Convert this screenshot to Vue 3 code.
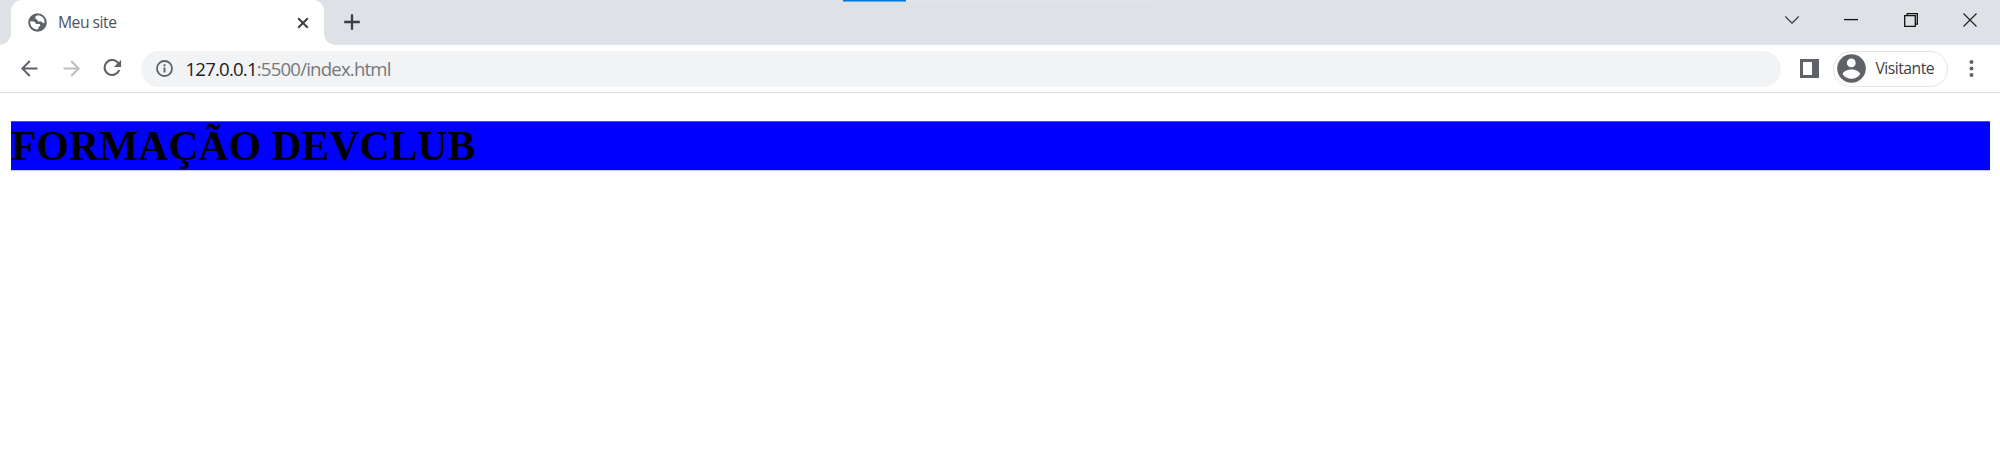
<script setup>
const pageTitle = 'Meu site'
const host = '127.0.0.1'
const path = ':5500/index.html'
</script>

<template>
  <div class="browser">
    <header class="tabstrip">
      <div class="loading"><div class="loading-value"></div></div>
      <div class="tab">
        <svg class="globe" width="19" height="19" viewBox="0 0 19 19">
          <circle cx="9.5" cy="9.5" r="9.3" fill="#5f6368" />
          <path d="M9.7 2.3C8.5 3 7.2 3.5 7.2 4.7c0 .8.4 1.3 1.2 1.5 1.3.2 1.4 1.1 1.1 2.1l4.1.2c.5 1.6 1.5 1.6 2.8 1.5.7-4-2.2-7.7-6.7-7.7zM2.2 8.3c-.5 4.3 2.8 8.3 7.4 8.2 1-.7.8-1.9 1.2-2.6.5-.7 1.5-.6 1.5-1.6 0-.8-.4-1.2-1.3-1.2H8.5c-1 0-.9-1.4-1.8-2.1-.9-.7-2.8-.5-4.5-.7z" fill="#fff" />
        </svg>
        <span class="tab-title">{{ pageTitle }}</span>
        <svg class="tab-close" width="12" height="12" viewBox="0 0 12 12"><path d="M1.2 1.2l9.6 9.6m0-9.6l-9.6 9.6" stroke="#3c4043" stroke-width="2" fill="none" /></svg>
      </div>
      <svg class="new-tab" width="16" height="16" viewBox="0 0 16 16"><path d="M8 .2v15.6M.2 8h15.6" stroke="#3c4043" stroke-width="2.3" /></svg>
      <div class="window-controls">
        <svg width="14" height="14" viewBox="0 0 14 14"><path d="M.3 3.4L7 10.1l6.7-6.7" fill="none" stroke="#333" stroke-width="1.1" /></svg>
        <svg width="14" height="14" viewBox="0 0 14 14"><path d="M0 6.6h14" stroke="#111" stroke-width="1.3" /></svg>
        <svg width="14" height="14" viewBox="0 0 14 14"><path d="M.7 2.7h10.6v10.6H.7zM3.2 2.7V.7h10.1v10.4h-2" fill="none" stroke="#111" stroke-width="1.3" /></svg>
        <svg width="14" height="14" viewBox="0 0 14 14"><path d="M.5.5l13 13m0-13l-13 13" stroke="#222" stroke-width="1.2" /></svg>
      </div>
    </header>
    <nav class="toolbar">
      <svg class="back" width="17" height="17" viewBox="0 0 17 17"><path d="M16.5 8.5H1.5M8.8 1L1.3 8.5 8.8 16" fill="none" stroke="#5f6368" stroke-width="2" /></svg>
      <svg class="forward" width="17" height="17" viewBox="0 0 17 17"><path d="M.5 8.5h15M8.2 1l7.5 7.5L8.2 16" fill="none" stroke="#bcbec0" stroke-width="2" /></svg>
      <svg class="reload" width="19" height="18" viewBox="0 0 19 18"><path d="M15.4 4.3A7.5 7.5 0 1 0 16.2 11" fill="none" stroke="#5f6368" stroke-width="2.1" /><path d="M18.1.7v7.2h-7.2z" fill="#5f6368" /></svg>
      <div class="address">
        <svg width="17" height="17" viewBox="0 0 17 17"><circle cx="8.5" cy="8.5" r="7.5" fill="none" stroke="#5f6368" stroke-width="1.8" /><path d="M8.5 7.5v5M8.5 4.3v1.9" stroke="#5f6368" stroke-width="1.9" /></svg>
        <span class="url"><span class="host">{{ host }}</span>{{ path }}</span>
      </div>
      <svg class="panel" width="19" height="19" viewBox="0 0 19 19"><path d="M0 0h19v19H0zM3 3v13h9V3z" fill="#5f6368" fill-rule="evenodd" /></svg>
      <div class="profile">
        <svg width="29" height="29" viewBox="0 0 29 29"><circle cx="14.5" cy="14.5" r="14.3" fill="#5f6368" /><circle cx="14.3" cy="8.9" r="4.4" fill="#fff" /><path d="M5.7 20.2c0-3 5.4-4.7 8.7-4.7s8.7 1.7 8.7 4.7c-1.9 2.8-5 4.6-8.7 4.6s-6.8-1.8-8.7-4.6z" fill="#fff" /></svg>
        <span class="profile-name">Visitante</span>
      </div>
      <svg class="menu" width="5" height="17" viewBox="0 0 5 17"><g fill="#5f6368"><circle cx="2.5" cy="2.1" r="2" /><circle cx="2.5" cy="8.5" r="2" /><circle cx="2.5" cy="14.9" r="2" /></g></svg>
    </nav>
    <main class="page"><h1>FORMAÇÃO DEVCLUB</h1></main>
  </div>
</template>

<style>
body { margin: 0; background: #fff; }
</style>

<style scoped>
.browser { height: 454px; overflow: hidden; background: #fff; font-family: "Open Sans", "Noto Sans", sans-serif; }
svg { display: block; flex: none; }
.tabstrip { position: relative; height: 45px; background: #dee1e6; display: flex; box-sizing: border-box; padding-left: 11px; }
.loading { position: absolute; top: 0; left: 843px; width: 313px; height: 1px; background: #e5e5e5; }
.loading-value { width: 63px; height: 2px; background: linear-gradient(#0078d7 50%, #62abe5 50%); }
.tab { position: relative; width: 313px; height: 45px; box-sizing: border-box; border-radius: 11px 11px 0 0; background: #fff; display: flex; align-items: center; padding: 0 16px; }
.tab::before, .tab::after { content: ""; position: absolute; bottom: 0; width: 11px; height: 11px; }
.tab::before { left: -11px; background: radial-gradient(circle at 0 0, transparent 10.5px, #fff 11px); }
.tab::after { right: -11px; background: radial-gradient(circle at 100% 0, transparent 10.5px, #fff 11px); }
.globe { margin-left: 1px; }
.tab-title { margin-left: 11px; margin-top: -1px; font-size: 15.7px; letter-spacing: -.5px; color: #4f5357; white-space: nowrap; }
.tab-close { margin-left: auto; margin-right: -1px; }
.new-tab { margin: 14px 0 0 20px; }
.window-controls { display: flex; gap: 45.5px; margin: 13px 23px 0 auto; }
.toolbar { height: 48px; box-sizing: border-box; border-bottom: 1px solid #dadcdf; display: flex; align-items: center; padding-left: 21px; }
.back, .forward, .reload, .menu { margin-top: -1px; }
.forward { margin-left: 25px; }
.reload { margin-left: 23px; }
.address { margin-left: 19px; width: 1640px; height: 36px; border-radius: 18px; background: #f1f3f4; display: flex; align-items: center; }
.address svg { margin-left: 15px; }
.url { margin-left: 12.5px; margin-top: -1px; font-size: 18.6px; letter-spacing: -.8px; color: #74787c; white-space: nowrap; }
.host { color: #202124; }
.panel { margin-left: 19px; }
.profile { margin-left: 14px; width: 115px; height: 36px; box-sizing: border-box; border: 1.5px solid #e4e5e7; border-radius: 18px; display: flex; align-items: center; padding-left: 2.5px; }
.profile-name { margin-left: 10px; margin-top: -2px; font-size: 15.7px; letter-spacing: -.5px; color: #3c4043; }
.menu { margin-left: 21px; }
.page { padding: 28px 10px 0 11px; }
h1 { margin: 0; height: 50px; line-height: 51px; font-family: "Liberation Serif", serif; font-size: 41.7px; font-weight: 700; color: #000; background: linear-gradient(#4a4aff 1px, #00f 1px 49px, #c5c5ff 49px); white-space: nowrap; }
</style>
